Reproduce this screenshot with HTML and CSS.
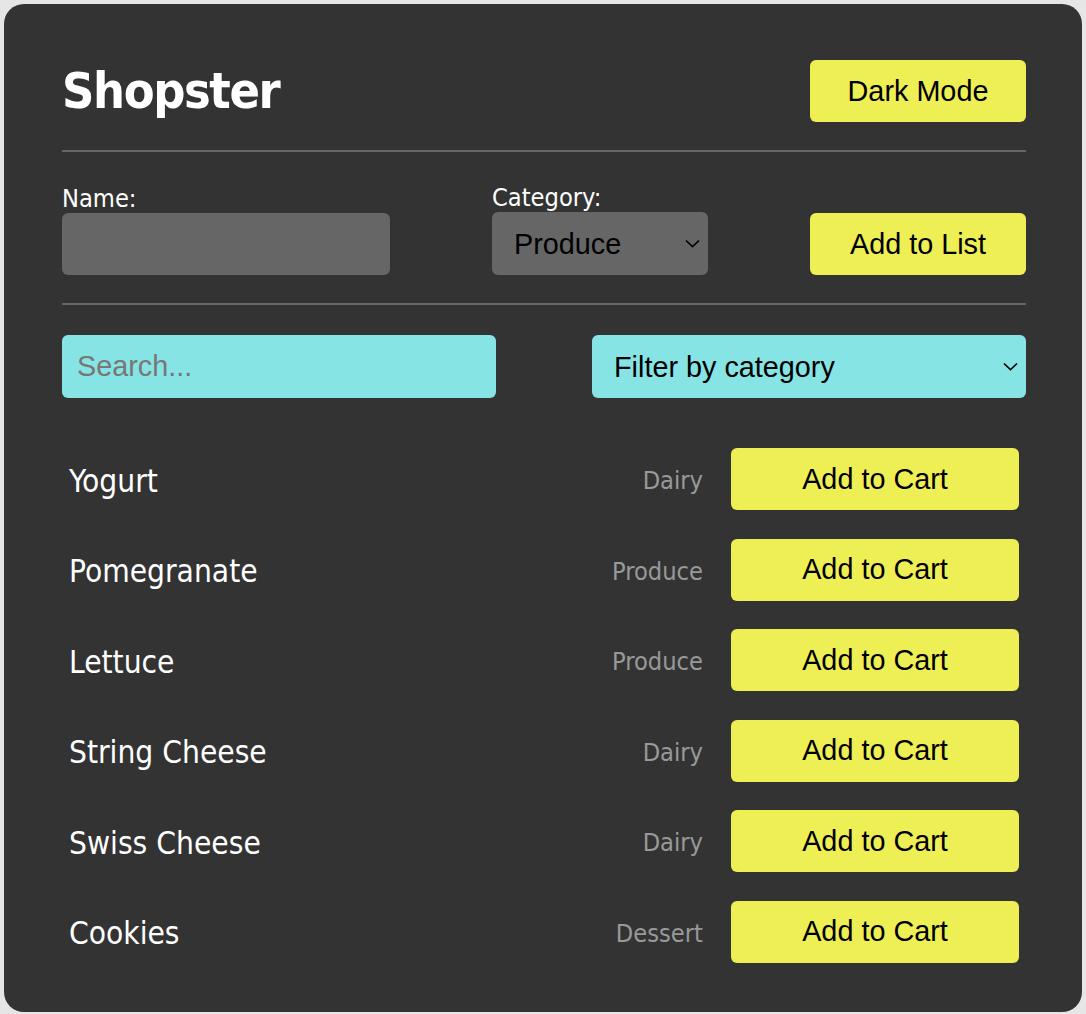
FILE: index.html
```html
<!DOCTYPE html>
<html>
<head>
<meta charset="utf-8">
<link rel="stylesheet" href="styles.css">
</head>
<body>
<div class="card">
  <header class="top">
    <h1 class="brand">Shopster</h1>
    <button class="btn btn-header">Dark Mode</button>
  </header>
  <div class="rule"></div>
  <form class="add-form">
    <div class="field field-name">
      <label class="lbl">Name:</label>
      <input class="txt" type="text">
    </div>
    <div class="field field-cat">
      <label class="lbl">Category:</label>
      <div class="sel-wrap">
        <select class="sel sel-gray"><option>Produce</option></select>
        <svg class="chev" width="15" height="9" viewBox="0 0 15 9"><path d="M1 1.5 L7.5 7.5 L14 1.5" fill="none" stroke="#000" stroke-width="1.7"/></svg>
      </div>
    </div>
    <button class="btn btn-add" type="button">Add to List</button>
  </form>
  <div class="rule"></div>
  <div class="tools">
    <input class="search" type="text" placeholder="Search...">
    <div class="sel-wrap filter-wrap">
      <select class="sel sel-cyan"><option>Filter by category</option></select>
      <svg class="chev" width="15" height="9" viewBox="0 0 15 9"><path d="M1 1.5 L7.5 7.5 L14 1.5" fill="none" stroke="#000" stroke-width="1.7"/></svg>
    </div>
  </div>
  <ul class="items">
    <li class="item"><span class="name">Yogurt</span><span class="cat">Dairy</span><button class="btn btn-cart">Add to Cart</button></li>
    <li class="item"><span class="name">Pomegranate</span><span class="cat">Produce</span><button class="btn btn-cart">Add to Cart</button></li>
    <li class="item"><span class="name">Lettuce</span><span class="cat">Produce</span><button class="btn btn-cart">Add to Cart</button></li>
    <li class="item"><span class="name">String Cheese</span><span class="cat">Dairy</span><button class="btn btn-cart">Add to Cart</button></li>
    <li class="item"><span class="name">Swiss Cheese</span><span class="cat">Dairy</span><button class="btn btn-cart">Add to Cart</button></li>
    <li class="item"><span class="name">Cookies</span><span class="cat">Dessert</span><button class="btn btn-cart">Add to Cart</button></li>
  </ul>
</div>
</body>
</html>
```
FILE: styles.css
```css
html, body {
  background: #e6e6e6;
}
body {
  margin: 4px;
  font-family: "DejaVu Sans Condensed", "DejaVu Sans", sans-serif;
  font-stretch: condensed;
}
.card {
  background: #333333;
  border-radius: 20px;
  padding: 56px 56px 49px 58px;
  height: 1008px;
  box-sizing: border-box;
}
.top {
  display: flex;
  justify-content: space-between;
  align-items: center;
  height: 62px;
}
.brand {
  margin: 0;
  color: #ffffff;
  font-size: 50px;
  font-weight: bold;
  letter-spacing: -1.4px;
}
.btn {
  background: #eeee55;
  border: none;
  border-radius: 6px;
  color: #000;
  font-family: "Liberation Sans", Arial, sans-serif;
  font-size: 28.8px;
  height: 62px;
  padding: 0;
}
.btn-header, .btn-add {
  width: 216px;
}
.rule {
  height: 2px;
  background: #666666;
  margin-top: 28px;
}
.add-form {
  display: flex;
  justify-content: space-between;
  align-items: flex-end;
  margin-top: 30px;
}
.add-form + .rule {
  margin-top: 28px;
}
.field {
  display: flex;
  flex-direction: column;
}
.field-name { width: 328px; }
.field-cat { width: 216px; }
.lbl {
  color: #ffffff;
  font-size: 25.2px;
  line-height: 30px;
  padding-top: 1px;
  margin-bottom: -1px;
}
.txt {
  height: 62px;
  border: none;
  border-radius: 6px;
  background: #666666;
  box-sizing: border-box;
  padding: 0 15px;
  font-family: "Liberation Sans", Arial, sans-serif;
  font-size: 28.8px;
}
.sel-wrap {
  position: relative;
}
.sel {
  appearance: none;
  -webkit-appearance: none;
  width: 100%;
  height: 63px;
  border: none;
  border-radius: 6px;
  padding: 0 0 0 22px;
  font-family: "Liberation Sans", Arial, sans-serif;
  font-size: 28.8px;
  color: #000;
}
.sel-gray { background: #666666; }
.sel-cyan { background: #87e4e4; }
.chev {
  position: absolute;
  right: 8px;
  top: 27px;
  pointer-events: none;
}
.tools {
  display: flex;
  justify-content: space-between;
  margin-top: 30px;
}
.search {
  width: 434px;
  height: 63px;
  border: none;
  border-radius: 6px;
  background: #87e4e4;
  box-sizing: border-box;
  padding: 0 15px;
  font-family: "Liberation Sans", Arial, sans-serif;
  font-size: 28.8px;
}
.search::placeholder { color: #777777; }
.filter-wrap { width: 434px; }
.items {
  list-style: none;
  margin: 50px 0 0;
  padding: 0 7px;
  display: flex;
  flex-direction: column;
  gap: 28.6px;
}
.item {
  display: flex;
  align-items: center;
  height: 62px;
}
.name {
  flex: 1;
  color: #ffffff;
  font-size: 31.4px;
  padding-top: 3px;
}
.cat {
  color: #999999;
  font-size: 25.2px;
  margin-right: 28px;
  padding-top: 3px;
}
.btn-cart {
  width: 288px;
}
```
